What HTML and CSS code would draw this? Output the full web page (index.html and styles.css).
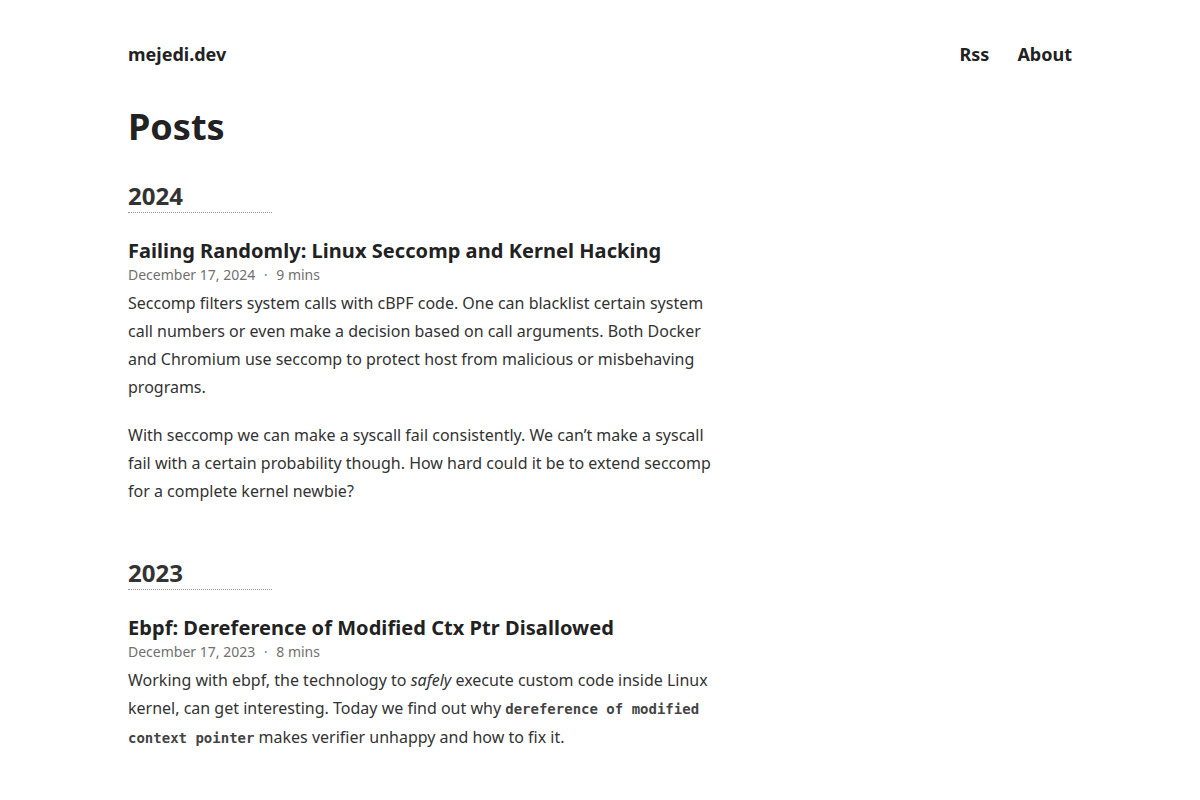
FILE: index.html
```html
<!DOCTYPE html>
<html lang="en">
<head>
    <meta charset="UTF-8">
    <meta name="viewport" content="width=device-width, initial-scale=1.0">
    <title>Posts | mejedi.dev</title>
    <link rel="stylesheet" href="styles.css">
</head>
<body>
<div class="wrapper">
    <header class="site-header">
        <a class="logo" href="/">mejedi.dev</a>
        <nav>
            <ul>
                <li><a href="/index.xml">Rss</a></li>
                <li><a href="/about/">About</a></li>
            </ul>
        </nav>
    </header>

    <main class="content">
        <h1 class="page-title">Posts</h1>

        <section class="year">
            <h2 class="year-title">2024</h2>
            <article class="post">
                <h3 class="post-title"><a href="#">Failing Randomly: Linux Seccomp and Kernel Hacking</a></h3>
                <div class="post-meta">December 17, 2024 <span class="sep">·</span> 9 mins</div>
                <div class="summary">
                    <p>Seccomp filters system calls with cBPF code. One can blacklist certain system call numbers or even make a decision based on call arguments. Both Docker and Chromium use seccomp to protect host from malicious or misbehaving programs.</p>
                    <p>With seccomp we can make a syscall fail consistently. We can’t make a syscall fail with a certain probability though. How hard could it be to extend seccomp for a complete kernel newbie?</p>
                </div>
            </article>
        </section>

        <section class="year">
            <h2 class="year-title">2023</h2>
            <article class="post">
                <h3 class="post-title"><a href="#">Ebpf: Dereference of Modified Ctx Ptr Disallowed</a></h3>
                <div class="post-meta">December 17, 2023 <span class="sep">·</span> 8 mins</div>
                <div class="summary">
                    <p>Working with ebpf, the technology to <em>safely</em> execute custom code inside Linux kernel, can get interesting. Today we find out why <code>dereference of modified context pointer</code> makes verifier unhappy and how to fix it.</p>
                </div>
            </article>
        </section>
    </main>
</div>
</body>
</html>
```

FILE: styles.css
```css
body {
    margin: 0;
    padding: 0;
    font-family: "Noto Sans", "Open Sans", sans-serif;
    font-size: 16px;
    line-height: 28px;
    color: #333;
    background: #fff;
}

a {
    color: inherit;
    text-decoration: none;
}

.wrapper {
    max-width: 944px;
    margin: 0 auto;
    padding: 0 128px;
}

.site-header {
    display: flex;
    justify-content: space-between;
    align-items: center;
    height: 108px;
}

.logo {
    font-size: 18px;
    font-weight: bold;
    color: #222;
}

nav ul {
    display: flex;
    list-style: none;
    margin: 0;
    padding: 0;
    gap: 28px;
}

nav ul li a {
    font-size: 18px;
    font-weight: bold;
    color: #222;
}

.content {
    max-width: 600px;
}

.page-title {
    margin: -1px 0 33px;
    font-size: 36px;
    line-height: 40px;
    color: #222;
}

.year {
    margin-bottom: 52px;
}

.year-title {
    display: inline-block;
    width: 144px;
    margin: 0 0 25px;
    font-size: 24px;
    line-height: 32px;
    color: #333;
    border-bottom: 1px dotted #999;
}

.post-title {
    margin: 0;
    font-size: 20px;
    line-height: 26px;
    letter-spacing: 0.05px;
    color: #222;
}

.post-meta {
    font-size: 14px;
    line-height: 22px;
    color: #707070;
}

.post-meta .sep {
    margin: 0 5px;
    color: #4a90c8;
}

.summary p {
    margin: 3px 0 20px;
}

.summary code {
    font-family: "DejaVu Sans Mono", monospace;
    font-size: 14px;
    font-weight: bold;
    color: #444;
}
```
